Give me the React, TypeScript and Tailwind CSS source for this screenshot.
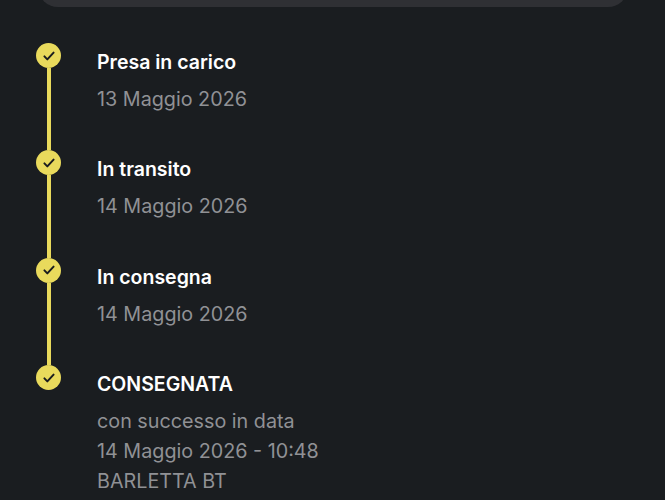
const steps = [
  { title: 'Presa in carico', lines: ['13 Maggio 2026'] },
  { title: 'In transito', lines: ['14 Maggio 2026'] },
  { title: 'In consegna', lines: ['14 Maggio 2026'] },
  { title: 'CONSEGNATA', lines: ['con successo in data', '14 Maggio 2026 - 10:48', 'BARLETTA BT'] },
];

function CheckIcon() {
  return (
    <svg viewBox="0 0 14 12" className="h-[10px] w-[12px]" fill="none">
      <path d="M1.5 6.5L5 10L12.5 2" stroke="#1a1c1f" strokeWidth="2.4" strokeLinecap="round" strokeLinejoin="round" />
    </svg>
  );
}

export default function App() {
  return (
    <div className="h-[500px] w-[665px] overflow-hidden bg-[#1a1d20] font-['Inter',sans-serif]">
      <div className="-mt-[33px] ml-[38px] h-[40px] w-[590px] rounded-[20px] bg-[#2f3034]" />
      <div className="flex flex-col pl-[36px] pt-[36px]">
        {steps.map((step, i) => {
          const last = i === steps.length - 1;
          return (
            <div key={step.title} className={last ? 'flex gap-[36px]' : 'flex h-[107.4px] gap-[36px]'}>
              <div className="flex w-[25px] flex-col items-center">
                <div className="flex h-[25px] w-[25px] shrink-0 items-center justify-center rounded-full bg-[#e9da5c]">
                  <CheckIcon />
                </div>
                {!last && <div className="w-[4px] flex-1 bg-[#e9da5c]" />}
              </div>
              <div className="pt-[4px]">
                <div className="text-[19.5px] font-semibold leading-[30px] text-white">{step.title}</div>
                <div className="mt-[7px] text-[19.75px] leading-[30px] text-[#909195]">
                  {step.lines.map((line) => (
                    <div key={line}>{line}</div>
                  ))}
                </div>
              </div>
            </div>
          );
        })}
      </div>
    </div>
  );
}
